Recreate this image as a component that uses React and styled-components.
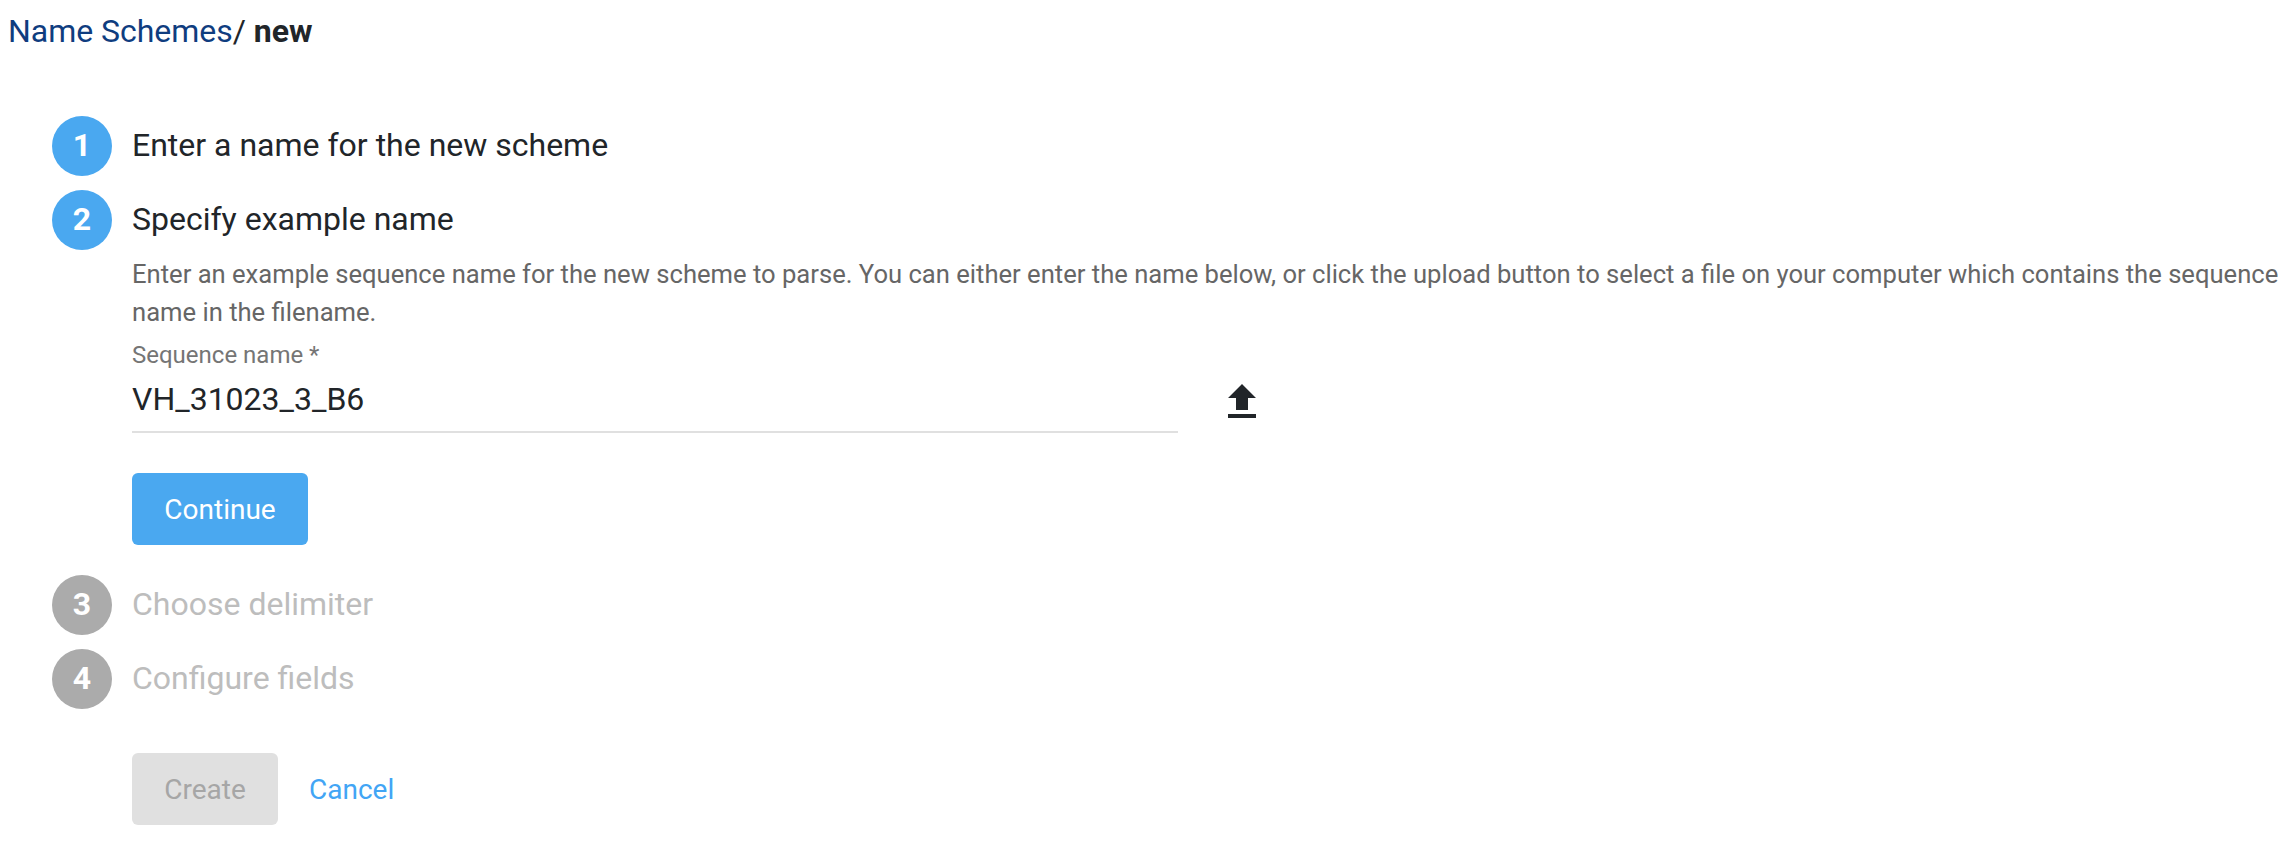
import React from 'react';
import styled, { createGlobalStyle } from 'styled-components';

const GlobalStyle = createGlobalStyle`
  html, body {
    margin: 0;
    padding: 0;
    background: #fff;
    font-family: Roboto, "Open Sans", sans-serif;
    color: #212529;
  }
`;

const Page = styled.div`
  padding: 12px 8px 0;
`;

const Breadcrumb = styled.div`
  font-size: 32px;
  line-height: 38px;
  letter-spacing: -0.03px;
`;

const Crumb = styled.a`
  color: #0f3d7f;
  text-decoration: none;
`;

const Current = styled.strong`
  font-weight: 700;
`;

const Steps = styled.div`
  margin: 66px 0 0 44px;
  display: flex;
  flex-direction: column;
  gap: 14px;
`;

const Step = styled.section`
  display: flex;
  flex-direction: column;
`;

const StepHeader = styled.div`
  display: flex;
  align-items: center;
  gap: 20px;
  height: 60px;
`;

const Badge = styled.div`
  width: 60px;
  height: 60px;
  padding-bottom: 2px;
  box-sizing: border-box;
  border-radius: 50%;
  background: ${p => (p.$active ? '#4aa8f0' : '#ababab')};
  color: #fff;
  font-size: 32px;
  font-weight: 700;
  display: flex;
  align-items: center;
  justify-content: center;
`;

const StepTitle = styled.div`
  font-size: 32px;
  padding-bottom: 2px;
  color: ${p => (p.$active ? '#212529' : '#bdbdbd')};
`;

const StepBody = styled.div`
  padding: 0 0 16px 80px;
`;

const Description = styled.p`
  margin: 5px 0 0;
  font-size: 25.6px;
  line-height: 38px;
  color: #666;
  max-width: 2162px;
`;

const FieldRow = styled.div`
  display: flex;
  align-items: flex-start;
`;

const Field = styled.label`
  display: block;
  width: 1046px;
`;

const FieldLabel = styled.div`
  font-size: 24px;
  line-height: 28px;
  margin-top: 10px;
  color: #757575;
`;

const FieldInput = styled.input`
  display: block;
  width: 100%;
  box-sizing: border-box;
  border: 0;
  border-bottom: 2px solid #e0e0e0;
  outline: 0;
  padding: 0 0 3px;
  height: 64px;
  font: inherit;
  font-size: 32px;
  color: #212529;
`;

const UploadButton = styled.button`
  border: 0;
  background: none;
  padding: 0;
  margin: 47px 0 0 40px;
  width: 48px;
  height: 48px;
  color: #212529;
`;

const Actions = styled.div`
  display: flex;
  align-items: center;
  gap: ${p => p.$gap || 0}px;
  margin-top: ${p => p.$top}px;
  margin-left: ${p => p.$left || 0}px;
`;

const Button = styled.button`
  height: 72px;
  width: ${p => p.$width}px;
  border: 0;
  border-radius: 6px;
  font: inherit;
  font-size: 28px;
  background: ${p => (p.$muted ? '#e0e0e0' : '#4aa8f0')};
  color: ${p => (p.$muted ? '#a6a6a6' : '#fff')};
`;

const CancelLink = styled.a`
  font-size: 28px;
  color: #42a5f5;
  text-decoration: none;
`;

const UploadIcon = () => (
  <svg width="48" height="48" viewBox="0 0 24 24" fill="currentColor">
    <path d="M9 16h6v-6h4l-7-7-7 7h4zm-4 2h14v2H5z" />
  </svg>
);

export default function App() {
  return (
    <Page>
      <GlobalStyle />
      <Breadcrumb>
        <Crumb href="#">Name Schemes</Crumb>/ <Current>new</Current>
      </Breadcrumb>
      <Steps>
        <Step>
          <StepHeader>
            <Badge $active>1</Badge>
            <StepTitle $active>Enter a name for the new scheme</StepTitle>
          </StepHeader>
        </Step>
        <Step>
          <StepHeader>
            <Badge $active>2</Badge>
            <StepTitle $active>Specify example name</StepTitle>
          </StepHeader>
          <StepBody>
            <Description>
              Enter an example sequence name for the new scheme to parse. You can either enter the name below, or click the upload button to select a file on your computer which contains the sequence name in the filename.
            </Description>
            <FieldRow>
              <Field>
                <FieldLabel>Sequence name *</FieldLabel>
                <FieldInput defaultValue="VH_31023_3_B6" />
              </Field>
              <UploadButton aria-label="Upload">
                <UploadIcon />
              </UploadButton>
            </FieldRow>
            <Actions $top={40}>
              <Button $width={176}>Continue</Button>
            </Actions>
          </StepBody>
        </Step>
        <Step>
          <StepHeader>
            <Badge>3</Badge>
            <StepTitle>Choose delimiter</StepTitle>
          </StepHeader>
        </Step>
        <Step>
          <StepHeader>
            <Badge>4</Badge>
            <StepTitle>Configure fields</StepTitle>
          </StepHeader>
        </Step>
      </Steps>
      <Actions $top={44} $left={124} $gap={31}>
        <Button $width={146} $muted disabled>Create</Button>
        <CancelLink href="#">Cancel</CancelLink>
      </Actions>
    </Page>
  );
}
